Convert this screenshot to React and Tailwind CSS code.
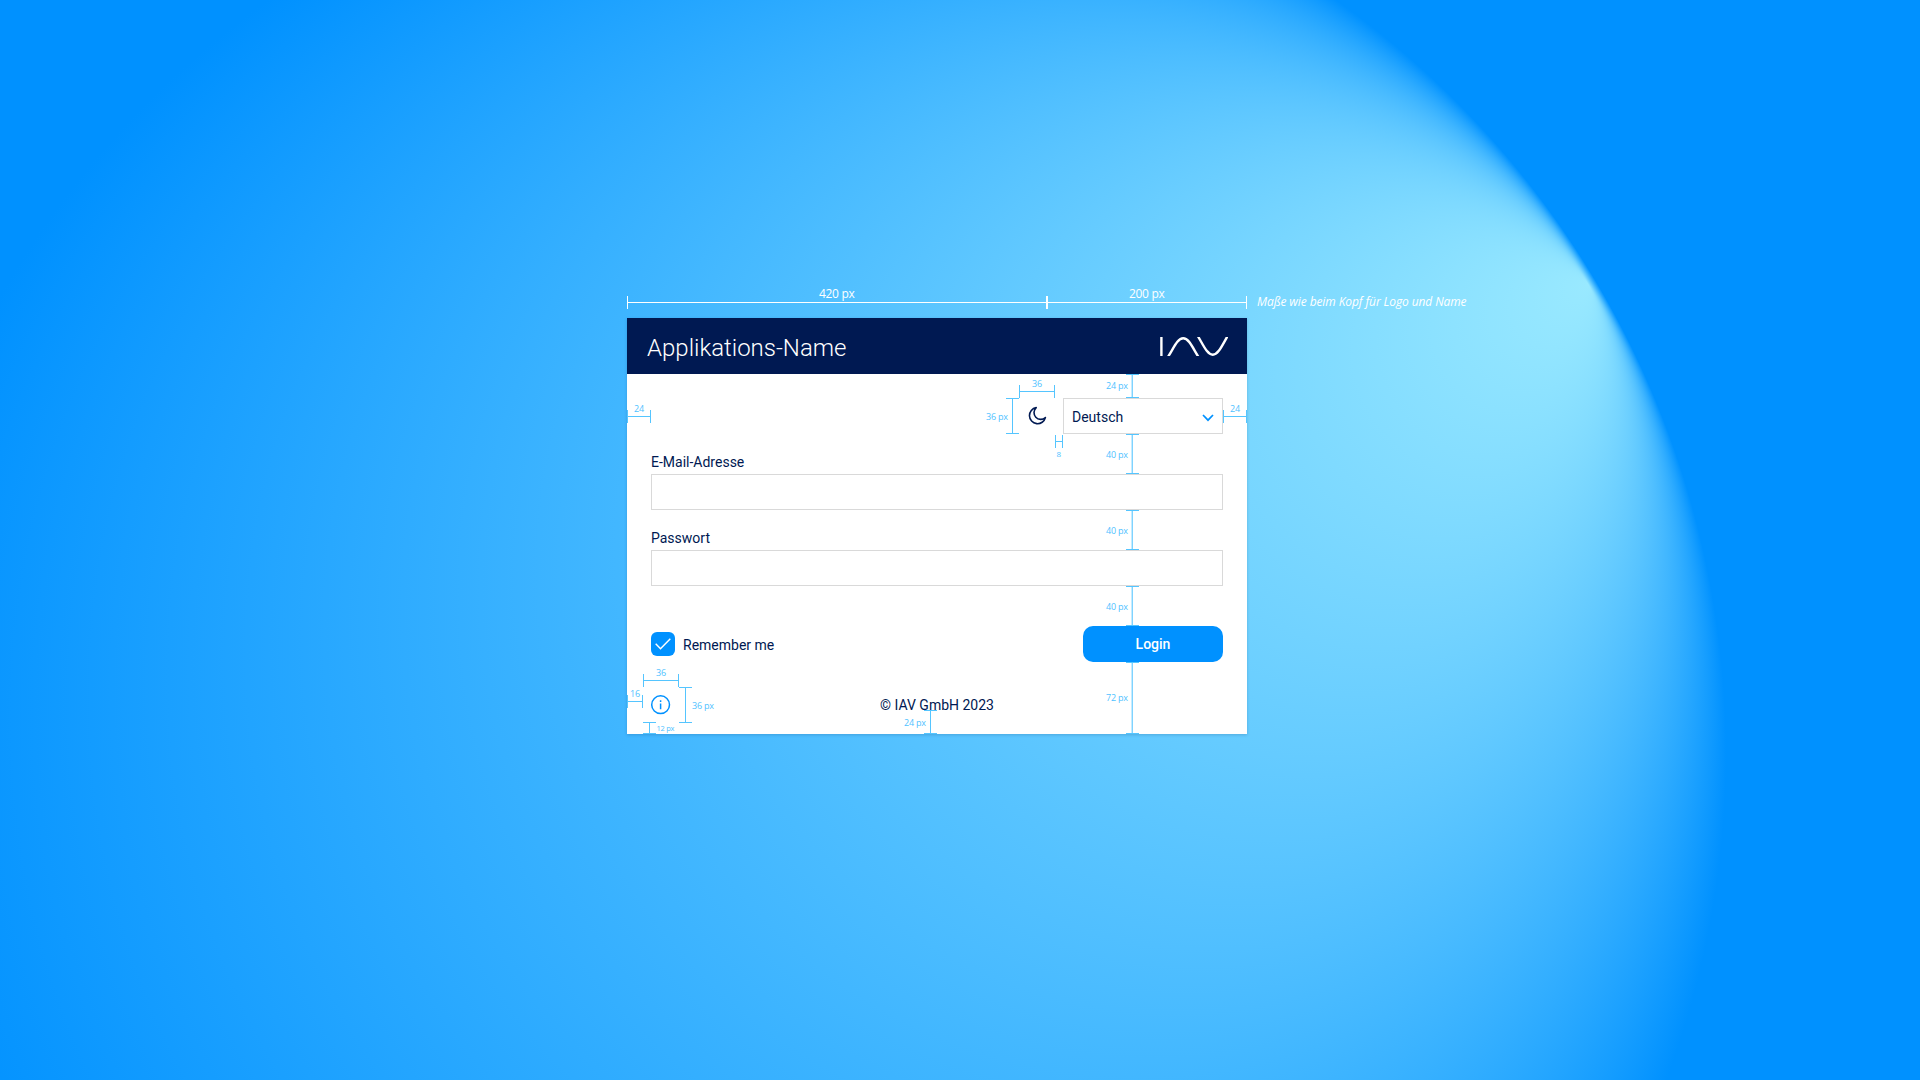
const LABEL = "absolute whitespace-nowrap leading-none text-[#4fc2ff] font-['Open_Sans',sans-serif] tracking-[-0.25px]";

function HDim({ pos, tone = "bg-[#55c5ff]" }) {
  return (
    <div className={`absolute h-[13px] flex items-center justify-between ${pos}`}>
      <span className={`w-px h-full ${tone}`} />
      <span className={`flex-1 h-px ${tone}`} />
      <span className={`w-px h-full ${tone}`} />
    </div>
  );
}

function VDim({ pos, soft = false }) {
  return (
    <div className={`absolute w-[13px] flex flex-col items-center ${pos}`}>
      <span className="w-full h-px bg-[#55c5ff]" />
      {soft ? (
        <span className="flex-1 flex w-[3px]">
          <span className="w-px bg-[#c4ebff]" />
          <span className="w-px bg-[#7fd3ff]" />
        </span>
      ) : (
        <span className="flex-1 w-px bg-[#55c5ff]" />
      )}
      <span className="w-full h-px bg-[#55c5ff]" />
    </div>
  );
}

function Background() {
  return (
    <svg className="absolute inset-0 w-full h-full" viewBox="0 0 1920 1080" preserveAspectRatio="none">
      <defs>
        <radialGradient id="glow" gradientUnits="userSpaceOnUse" cx="802" cy="754" r="924" fx="1588" fy="284">
          <stop offset="0" stopColor="#99e9ff" />
          <stop offset="1" stopColor="#0091ff" />
        </radialGradient>
      </defs>
      <rect width="1920" height="1080" fill="url(#glow)" />
    </svg>
  );
}

function Logo() {
  return (
    <svg className="w-[68px] h-[19px] mr-[-0.5px]" viewBox="0 0.5 68 19" fill="none" stroke="#fff" strokeWidth="2.4">
      <path d="M1.4 0V20" />
      <path d="M7.500 21.200C14 11 17.500 1.800 23.200 1.800C29 1.800 32.500 11 38.900 21.200" />
      <path d="M37.400 -1.200C43.500 9 47.300 18.200 52.800 18.200C58.300 18.200 62 9 68 -1.200" />
    </svg>
  );
}

function Field({ label, type, className }) {
  return (
    <label className={`block ${className}`}>
      <span className="block h-6 leading-6">{label}</span>
      <input type={type} className="block w-full h-9 border border-[#d9d9d9] bg-white outline-none px-2" />
    </label>
  );
}

function Dimensions() {
  return (
    <div className="absolute inset-0 pointer-events-none">
      <HDim pos="left-0 -top-[22px] w-[420px]" tone="bg-white" />
      <HDim pos="left-[420px] -top-[22px] w-[200px]" tone="bg-white" />
      <span className="absolute left-[192px] -top-[30px] leading-none whitespace-nowrap text-white font-['Open_Sans',sans-serif] text-[12px] tracking-[-0.3px]">420 px</span>
      <span className="absolute left-[502px] -top-[30px] leading-none whitespace-nowrap text-white font-['Open_Sans',sans-serif] text-[12px] tracking-[-0.3px]">200 px</span>
      <span className="absolute left-[630px] -top-[22px] leading-none whitespace-nowrap text-white italic font-['Open_Sans',sans-serif] text-[12px] tracking-[-0.1px]">Maße wie beim Kopf für Logo und Name</span>

      <HDim pos="left-0 top-[92px] w-6" />
      <span className={`${LABEL} text-[9px] left-[7px] top-[86px]`}>24</span>
      <HDim pos="left-[596px] top-[92px] w-6" />
      <span className={`${LABEL} text-[9px] left-[603px] top-[86px]`}>24</span>
      <HDim pos="left-[392px] top-[67px] w-9" />
      <span className={`${LABEL} text-[9px] left-[405px] top-[61px]`}>36</span>
      <VDim pos="left-[379px] top-[80px] h-9" />
      <span className={`${LABEL} text-[9px] left-[359px] top-[94px]`}>36 px</span>
      <HDim pos="left-[428px] top-[117px] w-2" />
      <span className={`${LABEL} text-[8px] left-[429.5px] top-[132px]`}>8</span>

      <VDim soft pos="left-[499px] top-[56px] h-6" />
      <span className={`${LABEL} text-[9px] left-[479px] top-[63px]`}>24 px</span>
      <VDim soft pos="left-[499px] top-[116px] h-10" />
      <span className={`${LABEL} text-[9px] left-[479px] top-[132px]`}>40 px</span>
      <VDim soft pos="left-[499px] top-[192px] h-10" />
      <span className={`${LABEL} text-[9px] left-[479px] top-[208px]`}>40 px</span>
      <VDim soft pos="left-[499px] top-[268px] h-10" />
      <span className={`${LABEL} text-[9px] left-[479px] top-[284px]`}>40 px</span>
      <VDim soft pos="left-[499px] top-[344px] h-[72px]" />
      <span className={`${LABEL} text-[9px] left-[479px] top-[375px]`}>72 px</span>

      <HDim pos="left-0 top-[377px] w-4" />
      <span className={`${LABEL} text-[9px] left-[3px] top-[371px]`}>16</span>
      <HDim pos="left-4 top-[356px] w-9" />
      <span className={`${LABEL} text-[9px] left-[29px] top-[350px]`}>36</span>
      <VDim pos="left-[52px] top-[369px] h-9" />
      <span className={`${LABEL} text-[9px] left-[65px] top-[383px]`}>36 px</span>
      <VDim pos="left-4 top-[404px] h-3" />
      <span className={`${LABEL} text-[7.5px] left-[29.5px] top-[407px]`}>12 px</span>
      <VDim pos="left-[297px] top-[392px] h-6" />
      <span className={`${LABEL} text-[9px] left-[277px] top-[400px]`}>24 px</span>
    </div>
  );
}

export default function App() {
  return (
    <div className="relative w-[1920px] h-[1080px] overflow-hidden bg-[#0091ff] font-['Roboto',sans-serif] text-[14px] text-[#001952]">
      <Background />
      <main className="relative w-[620px] h-[416px] mt-[318px] ml-[627px] bg-white shadow-[0_1px_3px_rgba(0,40,90,0.2)] flex flex-col">
        <header className="h-14 bg-[#001952] flex items-center justify-between px-5 shrink-0">
          <h1 className="text-white text-[24px] font-light leading-none pt-1">Applikations-Name</h1>
          <Logo />
        </header>
        <div className="px-6 pt-6">
          <div className="flex justify-end gap-2">
            <button className="size-9 flex items-center justify-center" aria-label="Theme">
              <svg className="size-6" viewBox="0 0 24 24" fill="none" stroke="#001952" strokeWidth="1.600" strokeLinejoin="round">
                <path d="M11.200 3.600A8.100 8.100 0 1 0 20.400 13.600A6.700 6.700 0 0 1 11.200 3.600Z" />
              </svg>
            </button>
            <button className="w-40 h-9 border border-[#d9d9d9] flex items-center justify-between pl-2 pr-2">
              <span className="pt-0.5">Deutsch</span>
              <svg className="w-3 h-2 mt-1" viewBox="0 0 12 8" fill="none" stroke="#0091ff" strokeWidth="1.700">
                <path d="M1 1L6 6.200L11 1" />
              </svg>
            </button>
          </div>
          <Field label="E-Mail-Adresse" type="email" className="mt-4" />
          <Field label="Passwort" type="password" className="mt-4" />
          <div className="mt-10 flex items-center justify-between">
            <div className="flex items-center gap-2">
              <span className="size-6 rounded-[6px] bg-[#0091ff] flex items-center justify-center">
                <svg className="w-4 h-3" viewBox="0 0 16 12" fill="none" stroke="#fff" strokeWidth="1.500">
                  <path d="M0.700 5.800L5.500 10.700L15.300 0.800" />
                </svg>
              </span>
              <span className="pt-0.5">Remember me</span>
            </div>
            <button className="w-[140px] h-9 rounded-[10px] bg-[#0091ff] text-white font-medium">Login</button>
          </div>
        </div>
        <footer className="mt-[25px] h-9 px-4 grid grid-cols-[36px_1fr_36px] items-center">
          <svg className="size-6 mx-auto" viewBox="0 0 24 24" fill="none" stroke="#0091ff" strokeWidth="1.500">
            <circle cx="11.600" cy="11.700" r="8.900" />
            <path d="M11.600 10.500V16.300M11.600 7.200V8.900" />
          </svg>
          <span className="text-center">© IAV GmbH 2023</span>
        </footer>
        <Dimensions />
      </main>
    </div>
  );
}
